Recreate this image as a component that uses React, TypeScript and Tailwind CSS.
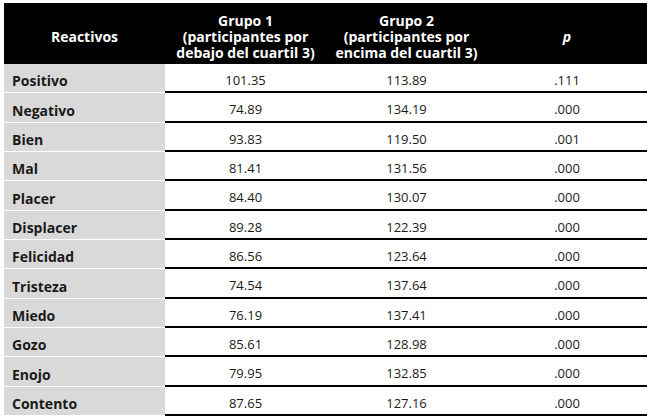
import React from 'react';

type Row = { label: string; g1: string; g2: string; p: string };

const rows: Row[] = [
  { label: 'Positivo', g1: '101.35', g2: '113.89', p: '.111' },
  { label: 'Negativo', g1: '74.89', g2: '134.19', p: '.000' },
  { label: 'Bien', g1: '93.83', g2: '119.50', p: '.001' },
  { label: 'Mal', g1: '81.41', g2: '131.56', p: '.000' },
  { label: 'Placer', g1: '84.40', g2: '130.07', p: '.000' },
  { label: 'Displacer', g1: '89.28', g2: '122.39', p: '.000' },
  { label: 'Felicidad', g1: '86.56', g2: '123.64', p: '.000' },
  { label: 'Tristeza', g1: '74.54', g2: '137.64', p: '.000' },
  { label: 'Miedo', g1: '76.19', g2: '137.41', p: '.000' },
  { label: 'Gozo', g1: '85.61', g2: '128.98', p: '.000' },
  { label: 'Enojo', g1: '79.95', g2: '132.85', p: '.000' },
  { label: 'Contento', g1: '87.65', g2: '127.16', p: '.000' },
];

export default function App() {
  return (
    <div className="w-[653px] h-[419px] overflow-hidden bg-white pt-[3px] pl-[4px] font-['Open_Sans',sans-serif] text-[13px] text-[#1a1a1a]">
      <div className="w-[643px]">
        {/* Header */}
        <div className="flex bg-black text-white font-bold text-[14px] leading-[16px] pt-[10px] pb-[3px]">
          <div className="w-[161px] flex items-center justify-center">Reactivos</div>
          <div className="w-[161px] text-center">
            Grupo 1
            <br />
            (participantes por
            <br />
            debajo del cuartil 3)
          </div>
          <div className="w-[161px] text-center">
            Grupo 2
            <br />
            (participantes por
            <br />
            encima del cuartil 3)
          </div>
          <div className="flex-1 flex items-center justify-center italic">p</div>
        </div>

        {/* Body */}
        {rows.map((r) => (
          <div key={r.label} className="flex h-[29.35px]">
            <div className="w-[161px] bg-[#d9d9d9] border-b border-white flex items-center pl-[8px] pt-[5px] font-bold text-[14px]">
              {r.label}
            </div>
            <div className="w-[161px] border-b-2 border-black flex items-center justify-center pt-[6px]">{r.g1}</div>
            <div className="w-[161px] border-b-2 border-black flex items-center justify-center pt-[6px]">{r.g2}</div>
            <div className="flex-1 border-b-2 border-black flex items-center justify-center pt-[6px]">{r.p}</div>
          </div>
        ))}
      </div>
    </div>
  );
}
